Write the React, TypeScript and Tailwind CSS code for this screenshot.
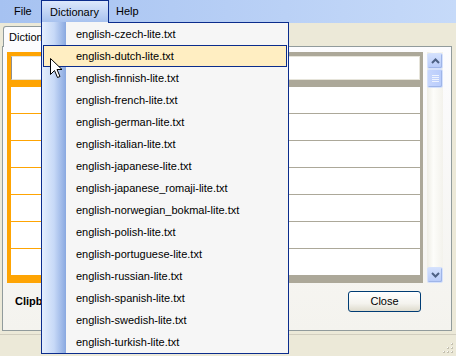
import React from "react";

const items = [
  "english-czech-lite.txt",
  "english-dutch-lite.txt",
  "english-finnish-lite.txt",
  "english-french-lite.txt",
  "english-german-lite.txt",
  "english-italian-lite.txt",
  "english-japanese-lite.txt",
  "english-japanese_romaji-lite.txt",
  "english-norwegian_bokmal-lite.txt",
  "english-polish-lite.txt",
  "english-portuguese-lite.txt",
  "english-russian-lite.txt",
  "english-spanish-lite.txt",
  "english-swedish-lite.txt",
  "english-turkish-lite.txt",
];

function ScrollBtn({ dir }: { dir: "up" | "down" }) {
  return (
    <div className="w-[16px] h-[16px] rounded-[2px] border border-[#d6e2fc] bg-[linear-gradient(to_bottom,#d3e0fd,#b8cbf9)] shadow-[inset_-1px_-1px_0_#9fb5e8] flex items-center justify-center">
      <svg width="9" height="6" viewBox="0 0 9 6">
        {dir === "up" ? (
          <path d="M1 5 L4.5 1.5 L8 5" fill="none" stroke="#4d6185" strokeWidth="2" />
        ) : (
          <path d="M1 1 L4.5 4.5 L8 1" fill="none" stroke="#4d6185" strokeWidth="2" />
        )}
      </svg>
    </div>
  );
}

export default function App() {
  return (
    <div className="relative w-[456px] h-[356px] overflow-hidden bg-[#ece9d8] font-['Liberation_Sans',Arial,sans-serif] text-[11px] leading-none text-black">
      {/* menu bar */}
      <div className="h-[23px] flex items-stretch bg-[linear-gradient(to_right,#a6c2f1,#c6daf9)]">
        <div className="w-[41px] pl-[14px] flex items-center">File</div>
        <div className="w-[68px] pl-[8px] flex items-center border border-b-0 border-[#0b2c8c] bg-[linear-gradient(to_bottom,#dce8fc,#a5c0ee)]">
          Dictionary
        </div>
        <div className="pl-[7px] flex items-center">Help</div>
      </div>

      {/* tab strip */}
      <div className="mt-[3px] ml-[3px] relative z-10 mb-[-1px] w-[72px] h-[21px] border border-b-0 border-[#919b9c] rounded-t-[3px] bg-[#fcfcfe] pl-[5px] pt-[5px]">
        Dictionary
      </div>

      {/* tab page */}
      <div className="ml-[2px] w-[450px] h-[285px] border border-[#919b9c] bg-[linear-gradient(to_bottom,#fcfcfe,#f4f3ee)] pt-[5px] pl-[4px]">
        <div className="flex gap-[4px]">
          {/* grid */}
          <div className="w-[416px] h-[231px] pt-[4px] pl-[4px] pr-[3px] pb-[8px] bg-[linear-gradient(to_right,#fea403_0px,#fea403_120px,#aca899_120px)] flex flex-col">
            <div className="h-[24px] bg-white border border-[#e6e4da] border-l-[#8d8d8d]" />
            <div className="mt-[7px] flex flex-col gap-px">
              {Array.from({ length: 7 }).map((_, i) => (
                <div key={i} className="h-[26px] bg-white" />
              ))}
            </div>
          </div>
          {/* scrollbar */}
          <div className="w-[16px] h-[231px] pt-px flex flex-col bg-[linear-gradient(to_right,#eeede5,#fdfdfa_40%,#f3f2ec)]">
            <ScrollBtn dir="up" />
            <div className="w-[16px] h-[19px] rounded-[2px] border border-[#d6e2fc] bg-[linear-gradient(to_right,#c6d6fd,#b9ccfb)] shadow-[inset_-1px_-1px_0_#9fb5e8] flex flex-col items-center justify-center gap-px">
              <div className="w-[7px] h-px bg-[#eef3fe]" />
              <div className="w-[7px] h-px bg-[#eef3fe]" />
              <div className="w-[7px] h-px bg-[#eef3fe]" />
              <div className="w-[7px] h-px bg-[#eef3fe]" />
            </div>
            <div className="flex-1" />
            <ScrollBtn dir="down" />
          </div>
        </div>
        <div className="mt-[8px] w-[416px] h-[21px] flex items-center justify-between">
          <div className="ml-[8px] font-bold text-[11px]">Clipboard:</div>
          <div className="mr-[2px] w-[73px] h-[21px] rounded-[3px] border border-[#003c74] bg-[linear-gradient(to_bottom,#ffffff,#f4f3ee_60%,#dedbcd)] flex items-center justify-center">
            Close
          </div>
        </div>
      </div>

      {/* status bar */}
      <div className="mt-[3px] h-[22px] border-t border-[#d2cebf] flex justify-end items-end pr-[3px] pb-[3px]">
        <svg width="10" height="10" viewBox="0 0 10 10">
          {[
            [8, 0], [8, 4], [4, 4], [8, 8], [4, 8], [0, 8],
          ].map(([x, y], i) => (
            <g key={i}>
              <rect x={x} y={y} width="2" height="2" fill="#c5c1b0" />
              <rect x={x} y={y} width="1" height="1" fill="#ffffff" />
            </g>
          ))}
        </svg>
      </div>

      {/* dropdown menu */}
      <div className="absolute z-20 left-[41px] top-[22px] w-[248px] h-[332px] border border-t-0 border-[#0b2c8c] bg-[#f6f6f6]">
        <div className="absolute top-0 left-[66px] right-0 h-px bg-[#0b2c8c]" />
        <div className="absolute left-0 top-0 bottom-0 w-[24px] bg-[linear-gradient(to_right,#e4eefd,#c7d9f7_50%,#89a8e0)]" />
        <div className="relative pt-px flex flex-col">
          {items.map((it, i) =>
            i === 1 ? (
              <div key={it} className="mx-px h-[22px] border border-[#0b2c8c] bg-[#ffeec2] pl-[32px] flex items-center">
                {it}
              </div>
            ) : (
              <div key={it} className="h-[22px] pl-[34px] flex items-center">
                {it}
              </div>
            )
          )}
        </div>
      </div>

      {/* mouse cursor */}
      <svg className="absolute z-30 left-[50px] top-[58px]" width="13" height="21" viewBox="0 0 13 21">
        <path
          d="M0.5 0.5 L0.5 16.5 L4.5 12.5 L7.5 19.5 L10 18.5 L7 11.5 L12 11.5 Z"
          fill="#ffffff"
          stroke="#000000"
          strokeWidth="1"
        />
      </svg>
    </div>
  );
}
